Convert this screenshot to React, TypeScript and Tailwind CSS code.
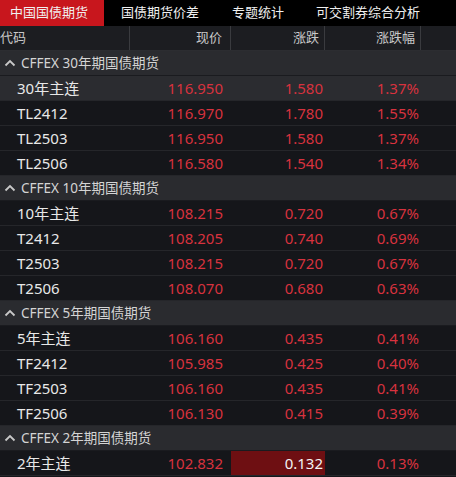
import React from "react";

type Row = { name: string; price: string; chg: string; pct: string; hl?: boolean; flash?: boolean };
type Section = { title: string; rows: Row[] };

const sections: Section[] = [
  {
    title: "CFFEX 30年期国债期货",
    rows: [
      { name: "30年主连", price: "116.950", chg: "1.580", pct: "1.37%", hl: true },
      { name: "TL2412", price: "116.970", chg: "1.780", pct: "1.55%" },
      { name: "TL2503", price: "116.950", chg: "1.580", pct: "1.37%" },
      { name: "TL2506", price: "116.580", chg: "1.540", pct: "1.34%" },
    ],
  },
  {
    title: "CFFEX 10年期国债期货",
    rows: [
      { name: "10年主连", price: "108.215", chg: "0.720", pct: "0.67%" },
      { name: "T2412", price: "108.205", chg: "0.740", pct: "0.69%" },
      { name: "T2503", price: "108.215", chg: "0.720", pct: "0.67%" },
      { name: "T2506", price: "108.070", chg: "0.680", pct: "0.63%" },
    ],
  },
  {
    title: "CFFEX 5年期国债期货",
    rows: [
      { name: "5年主连", price: "106.160", chg: "0.435", pct: "0.41%" },
      { name: "TF2412", price: "105.985", chg: "0.425", pct: "0.40%" },
      { name: "TF2503", price: "106.160", chg: "0.435", pct: "0.41%" },
      { name: "TF2506", price: "106.130", chg: "0.415", pct: "0.39%" },
    ],
  },
  {
    title: "CFFEX 2年期国债期货",
    rows: [{ name: "2年主连", price: "102.832", chg: "0.132", pct: "0.13%", flash: true }],
  },
];

const font = { fontFamily: '"Noto Sans", "Noto Sans CJK SC", sans-serif' };

function Chevron() {
  return (
    <svg width="12" height="8" viewBox="0 0 12 8" className="mr-[5px]">
      <path d="M1.5 6.5 L6 2 L10.5 6.5" stroke="#c8c8c8" strokeWidth="1.8" fill="none" />
    </svg>
  );
}

export default function App() {
  return (
    <div className="w-[456px] h-[477px] overflow-hidden bg-[#15161a]" style={font}>
      <div className="flex h-[26px] bg-black text-[13px] text-[#f0f0f0] items-stretch">
        <div className="flex items-center pl-[10px] pr-[16px] bg-[#c8161d]">中国国债期货</div>
        <div className="flex items-center px-[17px]">国债期货价差</div>
        <div className="flex items-center px-[16px]">专题统计</div>
        <div className="flex items-center px-[16px]">可交割券综合分析</div>
      </div>
      <div className="grid grid-cols-[130px_101px_94px_96px_1fr] h-[25px] bg-[#1c1d21] text-[13px] text-[#c8c8c8] border-b border-[#2c2d31]">
        <div className="flex items-center border-r border-[#3a3b3f]">代码</div>
        <div className="flex items-center justify-end pr-[8px] border-r border-[#3a3b3f]">现价</div>
        <div className="flex items-center justify-end pr-[5px] border-r border-[#3a3b3f]">涨跌</div>
        <div className="flex items-center justify-end pr-[5px] border-r border-[#3a3b3f]">涨跌幅</div>
        <div />
      </div>
      {sections.map((s) => (
        <div key={s.title}>
          <div className="flex items-center h-[25px] bg-[#2a2b2f] pl-[4px] text-[13.5px] text-[#d4d4d4] border-b border-[#1a1b1f]">
            <Chevron />
            {s.title}
          </div>
          {s.rows.map((r) => (
            <div
              key={r.name}
              className={
                "grid grid-cols-[130px_101px_94px_96px_1fr] h-[25px] text-[15px] border-b border-[#25262a] " +
                (r.hl ? "bg-[#2b2c30]" : "bg-[#15161a]")
              }
            >
              <div className="flex items-center pl-[17px] text-[#e8e8e8]">{r.name}</div>
              <div className="flex items-center justify-end pr-[8px] text-[#d8323e]">{r.price}</div>
              <div
                className={
                  "flex items-center justify-end pr-[2px] " +
                  (r.flash ? "bg-[#6e0f12] text-[#f4f4f4]" : "text-[#d8323e]")
                }
              >
                {r.chg}
              </div>
              <div className="flex items-center justify-end pr-[2px] text-[#d8323e]">{r.pct}</div>
              <div />
            </div>
          ))}
        </div>
      ))}
    </div>
  );
}
